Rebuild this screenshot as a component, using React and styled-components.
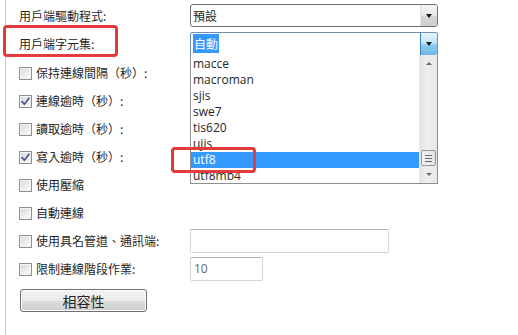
import styled, { createGlobalStyle } from 'styled-components';

const GlobalStyle = createGlobalStyle`
  html, body {
    margin: 0;
    padding: 0;
    background: #fff;
  }
  body {
    font-family: "Noto Sans CJK TC", "Noto Sans", sans-serif;
    font-size: 12px;
    color: #262626;
  }
`;

const charsets = ['macce', 'macroman', 'sjis', 'swe7', 'tis620', 'ujis', 'utf8', 'utf8mb4'];

const options = [
  { label: '保持連線間隔（秒）:', checked: false },
  { label: '連線逾時（秒）:', checked: true },
  { label: '讀取逾時（秒）:', checked: false },
  { label: '寫入逾時（秒）:', checked: true },
  { label: '使用壓縮', checked: false },
  { label: '自動連線', checked: false },
  { label: '使用具名管道、通訊端:', checked: false, input: { width: 199, value: '' } },
  { label: '限制連線階段作業:', checked: false, input: { width: 73, value: '10' } },
];

export default function App() {
  return (
    <Page>
      <GlobalStyle />
      <Panel>
        <Row $h={23}>
          <Label>用戶端驅動程式:</Label>
          <Combo>
            <ComboText>預設</ComboText>
            <ArrowBtn>
              <Arrow />
            </ArrowBtn>
          </Combo>
        </Row>

        <Row $h={24} $mt={5}>
          <Label>用戶端字元集:</Label>
          <Combo $open>
            <ComboText>
              <Selected>自動</Selected>
            </ComboText>
            <ArrowBtn $open>
              <Arrow />
            </ArrowBtn>
            <DropList>
              <Items>
                {charsets.map((c) => (
                  <Item key={c} $active={c === 'utf8'}>
                    {c}
                  </Item>
                ))}
              </Items>
              <ScrollBar>
                <ScrollBtn>
                  <SmallArrow $up />
                </ScrollBtn>
                <Track>
                  <Thumb>
                    <Grip />
                    <Grip />
                    <Grip />
                  </Thumb>
                </Track>
                <ScrollBtn>
                  <SmallArrow />
                </ScrollBtn>
              </ScrollBar>
            </DropList>
          </Combo>
        </Row>

        {options.map((o, i) => (
          <Row key={o.label} $h={28} $mt={i === 0 ? 3 : 0}>
            <CheckLabel>
              <Box>
                {o.checked && (
                  <svg width="11" height="11" viewBox="0 0 11 11">
                    <path
                      d="M2 5.6 L4.4 8.2 L9 2.2"
                      fill="none"
                      stroke="#4a5e88"
                      strokeWidth="1.8"
                      strokeLinecap="round"
                      strokeLinejoin="round"
                    />
                  </svg>
                )}
              </Box>
              {o.label}
            </CheckLabel>
            {o.input && <TextField $w={o.input.width}>{o.input.value}</TextField>}
          </Row>
        ))}

        <Button>相容性</Button>
      </Panel>

      <Mark $x={3} $y={25} $w={115} $h={32} />
      <Mark $x={171} $y={147} $w={85} $h={26} />
    </Page>
  );
}

const Page = styled.div`
  position: relative;
  width: 518px;
  height: 335px;
  overflow: hidden;
  padding-left: 5px;
  box-sizing: border-box;
`;

const Panel = styled.div`
  height: 100%;
  box-sizing: border-box;
  border-left: 1px solid #cdcdcd;
  padding: 4px 0 0 13px;
  display: flex;
  flex-direction: column;
`;

const Row = styled.div`
  display: grid;
  grid-template-columns: 171px auto;
  align-items: center;
  height: ${(p) => p.$h}px;
  margin-top: ${(p) => p.$mt || 0}px;
`;

const Label = styled.div`
  font-size: 12px;
  line-height: 16px;
  white-space: nowrap;
`;

const Combo = styled.div`
  position: relative;
  width: 248px;
  height: 100%;
  box-sizing: border-box;
  border: 1px solid ${(p) => (p.$open ? '#6d8fb0' : '#707070')};
  border-radius: ${(p) => (p.$open ? '2px 2px 0 0' : '3px')};
  background: #fff;
  display: flex;
  align-items: center;
`;

const ComboText = styled.div`
  flex: 1;
  padding-left: 2px;
  font-size: 12px;
  line-height: 16px;
`;

const Selected = styled.span`
  background: #3399ff;
  color: #fff;
  padding: 1px 1px;
`;

const ArrowBtn = styled.div`
  width: 17px;
  height: 100%;
  box-sizing: border-box;
  display: flex;
  align-items: center;
  justify-content: center;
  border-left: 1px solid ${(p) => (p.$open ? '#3c7fb1' : '#e2e2e2')};
  background: ${(p) =>
    p.$open
      ? 'linear-gradient(#e6f4fc 0%, #c4e5f8 45%, #8ccbf0 55%, #6fb6e6 100%)'
      : 'linear-gradient(#f4f4f4 0%, #e6e6e6 50%, #d6d6d6 51%, #cfcfcf 100%)'};
  border-radius: 0 2px 2px 0;
`;

const Arrow = styled.div`
  width: 0;
  height: 0;
  border-left: 3.5px solid transparent;
  border-right: 3.5px solid transparent;
  border-top: 4px solid #1a1a1a;
`;

const DropList = styled.div`
  position: absolute;
  top: 100%;
  left: -1px;
  width: 248px;
  height: 129px;
  box-sizing: border-box;
  border: 1px solid #8e8e8e;
  border-top: none;
  background: #fff;
  display: flex;
  z-index: 2;
`;

const Items = styled.div`
  flex: 1;
  overflow: hidden;
  padding-top: 1px;
`;

const Item = styled.div`
  height: 16px;
  line-height: 16px;
  padding-left: 2px;
  font-family: "Open Sans", "Noto Sans", sans-serif;
  font-size: 12px;
  color: ${(p) => (p.$active ? '#fff' : '#262626')};
  background: ${(p) => (p.$active ? '#3399ff' : 'transparent')};
`;

const ScrollBar = styled.div`
  width: 17px;
  display: flex;
  flex-direction: column;
  background: linear-gradient(90deg, #e3e3e3, #eeeeee 40%, #e6e6e6);
  border-left: 1px solid #e8e8e8;
`;

const ScrollBtn = styled.div`
  height: 17px;
  display: flex;
  align-items: center;
  justify-content: center;
`;

const SmallArrow = styled.div`
  width: 0;
  height: 0;
  border-left: 3px solid transparent;
  border-right: 3px solid transparent;
  ${(p) =>
    p.$up ? 'border-bottom: 3px solid #6a6a6a;' : 'border-top: 3px solid #6a6a6a;'}
`;

const Track = styled.div`
  flex: 1;
  display: flex;
  flex-direction: column;
  justify-content: flex-end;
  align-items: center;
`;

const Thumb = styled.div`
  width: 15px;
  height: 16px;
  box-sizing: border-box;
  border: 1px solid #959595;
  border-radius: 2px;
  background: linear-gradient(90deg, #f4f4f4, #e2e2e2);
  display: flex;
  flex-direction: column;
  justify-content: center;
  align-items: center;
  gap: 2px;
`;

const Grip = styled.div`
  width: 7px;
  height: 1px;
  background: #6a6a6a;
`;

const CheckLabel = styled.label`
  display: flex;
  align-items: center;
  gap: 4px;
  font-size: 12px;
  line-height: 16px;
  white-space: nowrap;
`;

const Box = styled.span`
  width: 13px;
  height: 13px;
  box-sizing: border-box;
  border: 1px solid #8e8f8f;
  background: linear-gradient(135deg, #d4d6da 0%, #eeeff1 60%, #f9f9f9 100%);
  box-shadow: inset 0 0 0 1px #f4f4f4;
  display: flex;
  align-items: center;
  justify-content: center;
`;

const TextField = styled.div`
  width: ${(p) => p.$w}px;
  height: 24px;
  box-sizing: border-box;
  border: 1px solid #d6d6d6;
  border-top-color: #b3b3b3;
  border-radius: 2px;
  padding-left: 3px;
  font-family: "Open Sans", "Noto Sans", sans-serif;
  font-size: 12px;
  line-height: 22px;
  color: #6a6a6a;
`;

const Button = styled.div`
  margin: 6px 0 0 1px;
  width: 127px;
  height: 23px;
  box-sizing: border-box;
  border: 1px solid #707070;
  border-radius: 3px;
  background: linear-gradient(#f2f2f2 0%, #ebebeb 50%, #dddddd 51%, #cfcfcf 100%);
  box-shadow: inset 0 0 0 1px #fcfcfc;
  display: flex;
  align-items: center;
  justify-content: center;
  font-size: 14px;
  color: #262626;
`;

const Mark = styled.div`
  position: absolute;
  left: ${(p) => p.$x}px;
  top: ${(p) => p.$y}px;
  width: ${(p) => p.$w}px;
  height: ${(p) => p.$h}px;
  box-sizing: border-box;
  border: 3px solid #e33b3b;
  border-radius: 4px;
  z-index: 5;
`;
